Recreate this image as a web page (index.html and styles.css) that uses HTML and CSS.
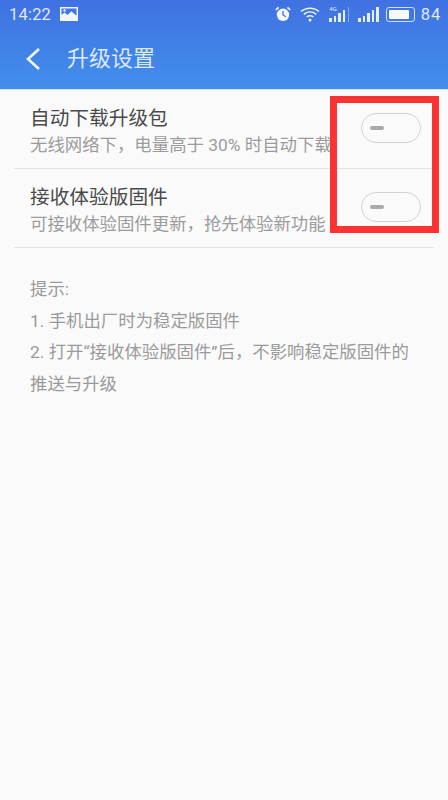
FILE: index.html
```html
<!DOCTYPE html>
<html lang="zh">
<head>
<meta charset="utf-8">
<title>升级设置</title>
<link rel="stylesheet" href="styles.css">
</head>
<body>
<div class="screen">
  <header class="top">
    <div class="status">
      <div class="status-group">
        <span class="time">14:22</span>
        <svg class="pic" viewBox="0 0 18 14"><path fill="#f2f6fe" fill-rule="evenodd" d="M0 0h18v14H0zM1.5 1.5v6.6l3-2.6 3.2 2.4 3.6-3.6 5.2 4.4V1.500z"/><circle cx="4.500" cy="3.500" r="1.200" fill="#f2f6fe"/></svg>
      </div>
      <div class="status-group right">
        <svg class="alarm" viewBox="0 0 16 16"><circle cx="8" cy="8.800" r="6.200" fill="#f4f7fe"/><path d="M8 5v4l2.800 1.800" fill="none" stroke="#4174e2" stroke-width="1.300"/><path d="M.8 4 3.500 1.300M15.200 4 12.500 1.300" stroke="#f4f7fe" stroke-width="1.700"/></svg>
        <svg class="wifi" viewBox="0 0 20 16"><g fill="none" stroke="#eef3fd" stroke-width="1.500"><path d="M1 5.500C6 1 14 1 19 5.500"/><path d="M3.800 8.300C7.500 5.300 12.500 5.300 16.200 8.300"/><path d="M6.600 11C8.600 9.500 11.400 9.500 13.400 11"/></g><circle cx="10" cy="14" r="1.500" fill="#eef3fd"/></svg>
        <span class="signal four-g"><i class="tag">4G</i><b class="b1"></b><b class="b2"></b><b class="b3"></b><b class="b4"></b><b class="b5 dim"></b></span>
        <span class="signal"><b class="b1"></b><b class="b2"></b><b class="b3"></b><b class="b4"></b><b class="b5"></b></span>
        <span class="battery"><span class="level"></span></span>
        <span class="pct">84</span>
      </div>
    </div>
    <div class="bar">
      <svg class="back" viewBox="0 0 16 24"><path d="M14 2 3 12l11 10" fill="none" stroke="#f2f6fe" stroke-width="2.600"/></svg>
      <h1>升级设置</h1>
    </div>
  </header>
  <main>
    <section class="list">
      <div class="row">
        <div class="texts">
          <div class="title">自动下载升级包</div>
          <div class="sub">无线网络下，电量高于 30% 时自动下载</div>
        </div>
        <span class="toggle"><span class="dash"></span></span>
      </div>
      <div class="row">
        <div class="texts">
          <div class="title">接收体验版固件</div>
          <div class="sub">可接收体验固件更新，抢先体验新功能</div>
        </div>
        <span class="toggle"><span class="dash"></span></span>
      </div>
    </section>
    <section class="tips">
      <p>提示:</p>
      <p>1. 手机出厂时为稳定版固件</p>
      <p>2. 打开“接收体验版固件”后，不影响稳定版固件的推送与升级</p>
    </section>
  </main>
  <div class="mark"></div>
</div>
</body>
</html>
```
FILE: styles.css
```css
* { box-sizing: border-box; }
html, body { margin: 0; padding: 0; }
body {
  width: 448px;
  height: 800px;
  overflow: hidden;
  background: #fafafa;
  font-family: "Roboto", "Noto Sans CJK SC", sans-serif;
}
.screen { position: relative; width: 448px; height: 800px; overflow: hidden; }
.top {
  height: 90px;
  background: linear-gradient(180deg, #4071e1 0%, #428fec 100%);
  border-bottom: 1px solid #d5e5f8;
}
.status {
  height: 28px;
  padding: 0 7px 0 9px;
  display: flex;
  align-items: center;
  justify-content: space-between;
  color: #dfe9fb;
  font-family: "Roboto", sans-serif;
  font-size: 16.500px;
}
.status-group { display: flex; align-items: center; gap: 9px; }
.status-group.right { gap: 8px; }
.time { letter-spacing: 0.2px; }
.pic { width: 18px; height: 14px; }
.alarm { width: 16px; height: 16px; margin-right: 1px; }
.wifi { width: 20px; height: 16px; margin-right: 1px; }
.signal { position: relative; display: flex; align-items: flex-end; gap: 2px; height: 16px; }
.signal b { display: block; width: 2.500px; background: #e6eefc; }
.signal .b1 { height: 4px; }
.signal .b2 { height: 6px; }
.signal .b3 { height: 9px; }
.signal .b4 { height: 12px; }
.signal .b5 { height: 15px; }
.signal .dim { opacity: 0.4; margin-left: 1px; width: 1px; }
.four-g { margin-right: 1px; }
.tag {
  position: absolute;
  left: 0;
  top: -1px;
  font-size: 6px;
  line-height: 7px;
  font-style: normal;
  color: #e6eefc;
}
.battery {
  display: flex;
  align-items: center;
  width: 29px;
  height: 15px;
  padding: 2px;
  margin-left: -1px;
  border: 1.500px solid #cfe0f9;
  border-radius: 3px;
}
.level { display: block; width: 20px; height: 9px; background: #f6f9ff; border-radius: 1px; }
.pct { font-size: 16.500px; letter-spacing: 0.8px; margin-left: -2px; }
.bar {
  height: 61px;
  padding-left: 25px;
  display: flex;
  align-items: center;
}
.back { width: 16px; height: 24px; }
h1 {
  margin: 0 0 0 26px;
  font-size: 22px;
  font-weight: 400;
  line-height: 30px;
  color: #dce8fb;
}
.list { padding: 0 14px; }
.row {
  height: 79px;
  padding: 0 0 0 16px;
  display: flex;
  align-items: center;
  justify-content: space-between;
  border-bottom: 1px solid #e3e3e3;
}
.texts { white-space: nowrap; padding-top: 4px; }
.title { font-size: 19.700px; line-height: 27px; color: #4a4a4a; }
.sub { font-size: 17.400px; line-height: 25px; color: #9c9c9c; margin-top: 1px; }
.toggle {
  display: flex;
  align-items: center;
  width: 60px;
  height: 30px;
  margin: 0 13px 2px 0;
  padding-left: 8px;
  border: 1.500px solid #d2d2d2;
  border-radius: 15px;
  flex: none;
}
.dash { display: block; width: 14px; height: 4px; background: #aaaaaa; border-radius: 2px; }
.tips { padding: 26px 30px 0; font-size: 17.400px; line-height: 31.700px; color: #9a9a9a; }
.tips p { margin: 0; }
.mark {
  position: absolute;
  left: 330px;
  top: 96px;
  width: 109px;
  height: 137px;
  border: 7px solid #fd3333;
}
```
